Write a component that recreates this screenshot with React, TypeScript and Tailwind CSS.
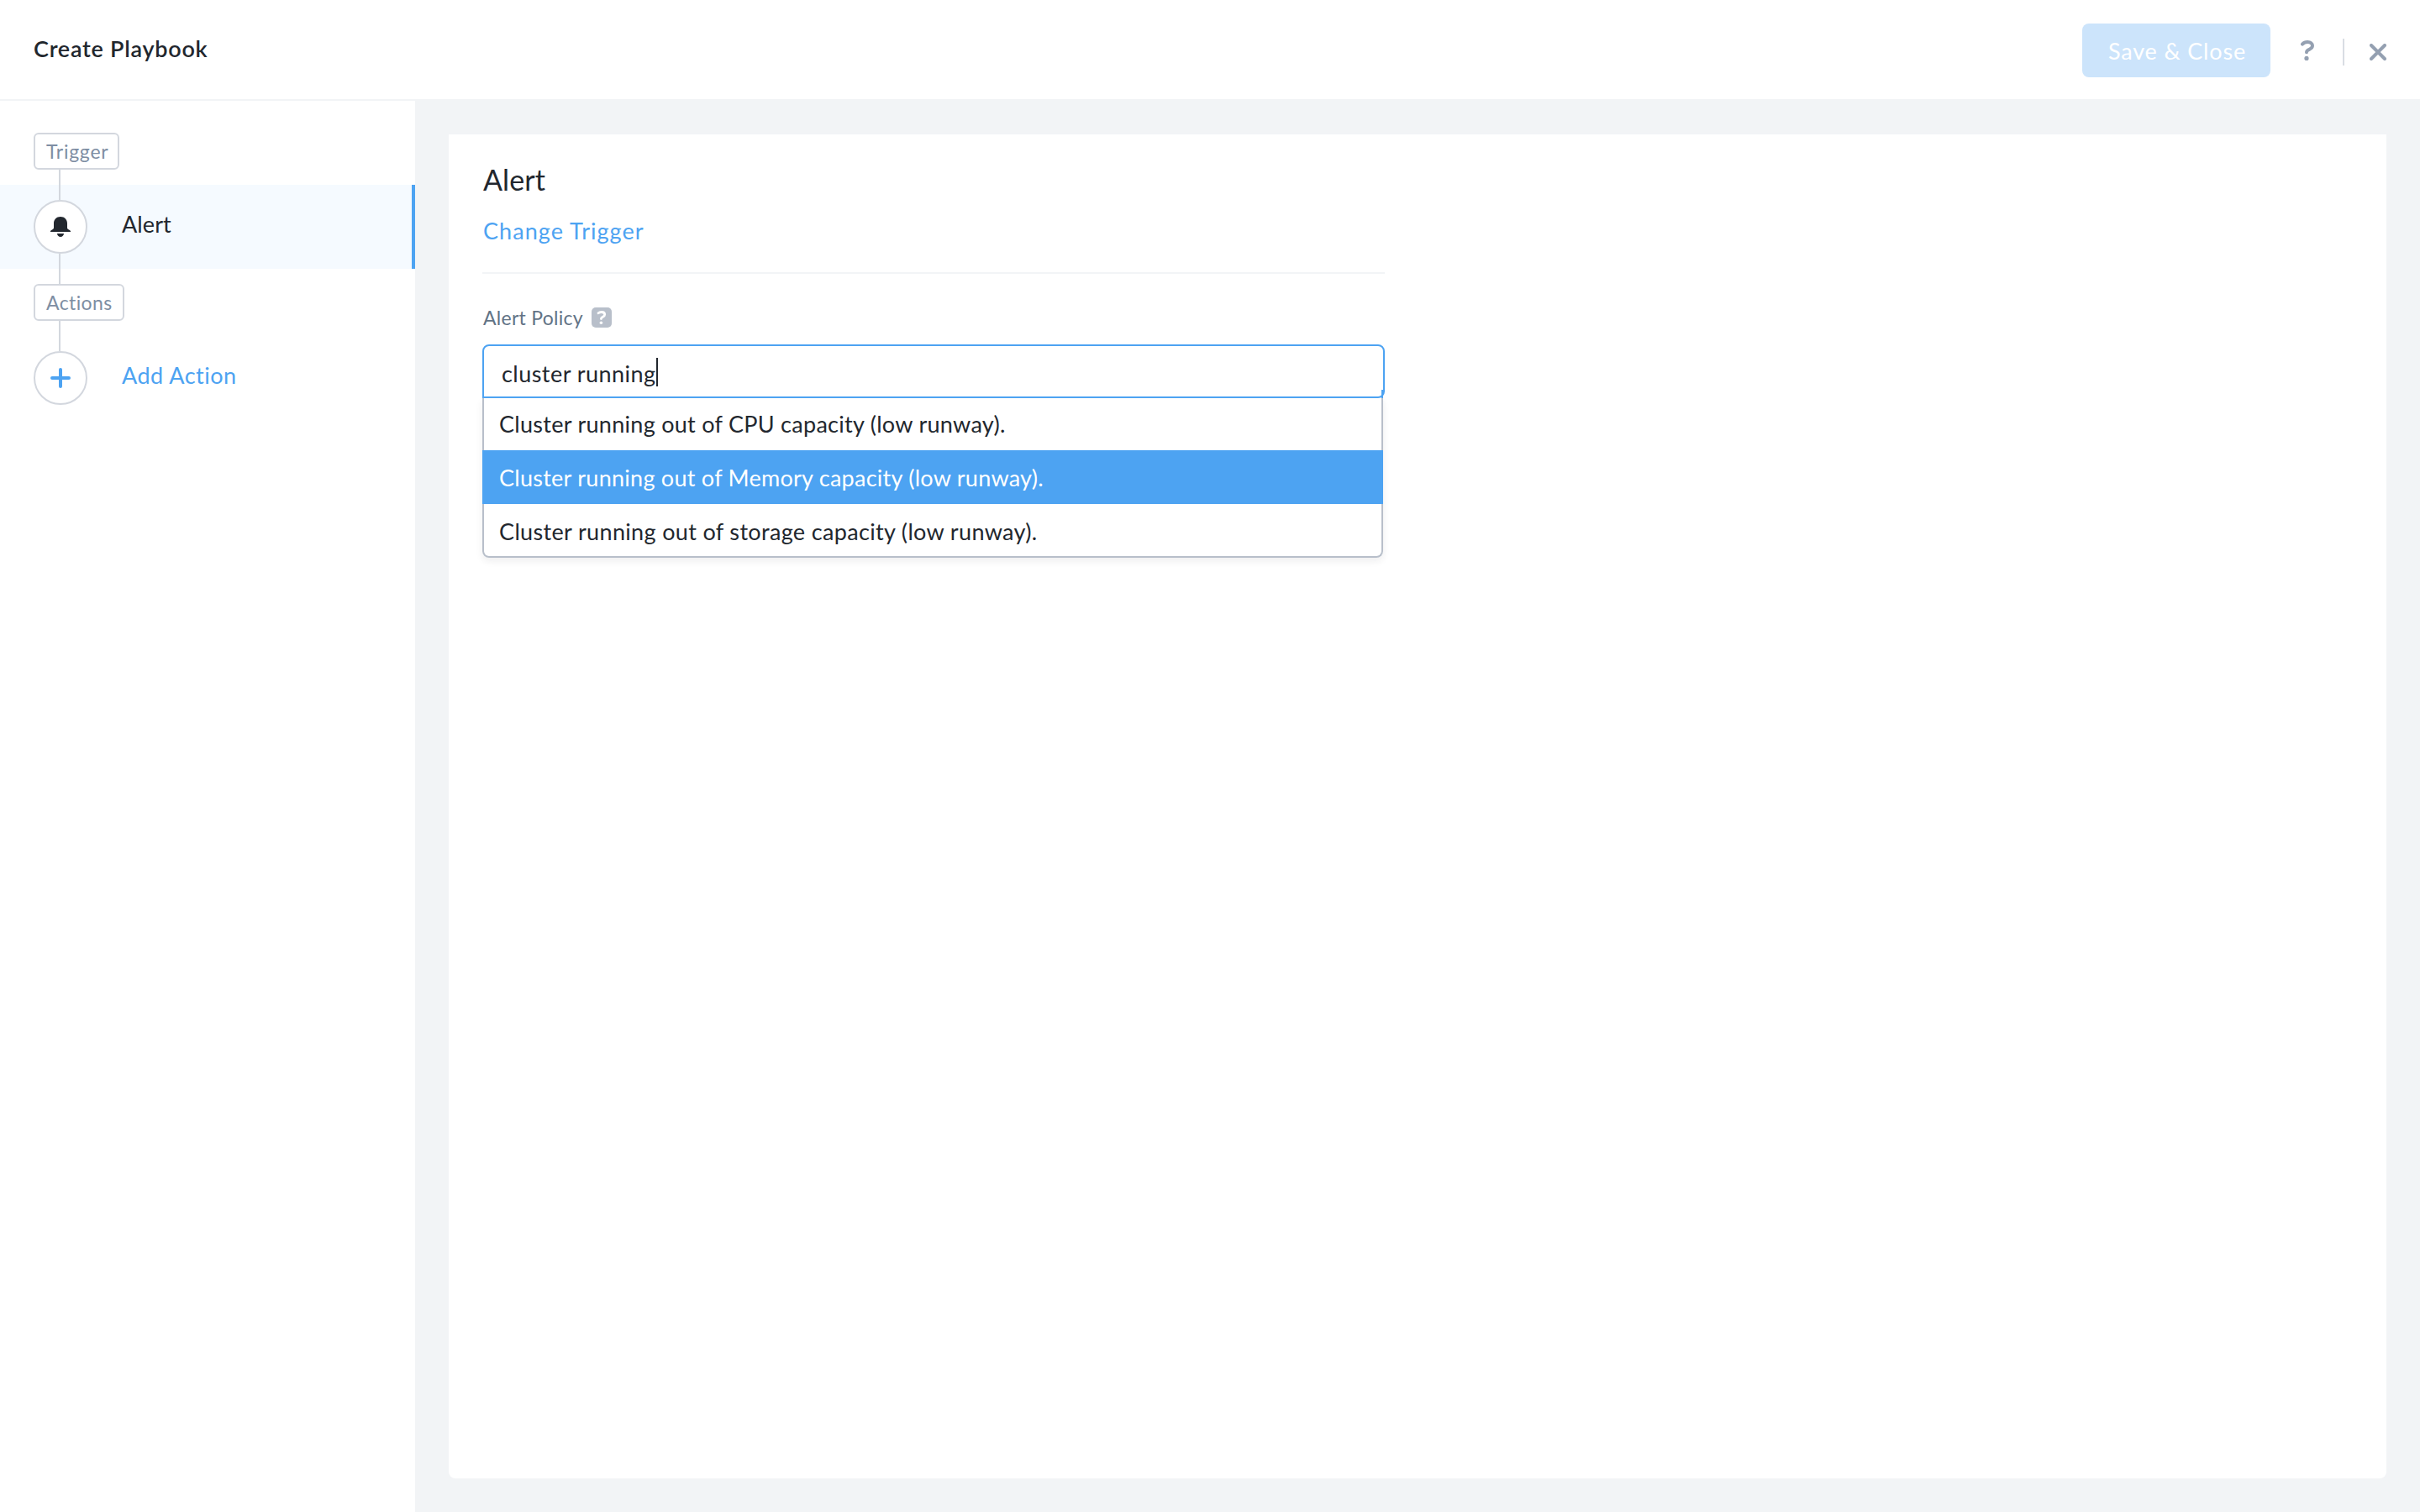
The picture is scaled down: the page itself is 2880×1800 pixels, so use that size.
import { useState } from 'react';

interface Policy {
  id: string;
  label: string;
  spacing: string;
}

const policies: Policy[] = [
  { id: 'cpu', label: 'Cluster running out of CPU capacity (low runway).', spacing: 'tracking-[0.28px]' },
  { id: 'memory', label: 'Cluster running out of Memory capacity (low runway).', spacing: 'tracking-[0.26px]' },
  { id: 'storage', label: 'Cluster running out of storage capacity (low runway).', spacing: 'tracking-[0.34px]' },
];

const BellIcon = () => (
  <svg width="24" height="24" viewBox="0 0 24 24" fill="#22272e">
    <path d="M12 0C7.2 0 4 3.4 4 8v5c0 1.2-.7 2-2 2.6C.7 16.2 0 16.8 0 17.6V18h24v-.4c0-.8-.7-1.4-2-2-1.3-.6-2-1.4-2-2.6V8c0-4.6-3.2-8-8-8z" />
    <path d="M8 20h8c0 2.2-1.8 4-4 4s-4-1.800-4-4z" />
  </svg>
);

const PlusIcon = () => (
  <svg width="24" height="24" viewBox="0 0 24 24" fill="none" stroke="#4da3f2" strokeWidth="4" strokeLinecap="round">
    <path d="M12 2v20M2 12h20" />
  </svg>
);

const QuestionIcon = () => (
  <svg width="16" height="24" viewBox="0 0 16 24" fill="none">
    <path
      d="M2 4.6C3.6 2.8 5.6 2 8.2 2c3.6 0 5.8 1.8 5.8 4.6 0 4.8-7 3.6-7 7.6"
      stroke="#94a0b1"
      strokeWidth="4"
      strokeLinecap="round"
      strokeLinejoin="round"
    />
    <circle cx="7" cy="21.4" r="2.6" fill="#94a0b1" />
  </svg>
);

const CloseIcon = () => (
  <svg width="20" height="20" viewBox="0 0 20 20" fill="none" stroke="#94a0b1" strokeWidth="4" strokeLinecap="round">
    <path d="M2 2l16 16M18 2L2 18" />
  </svg>
);

const HelpBadge = () => (
  <svg width="24" height="24" viewBox="0 0 24 24" fill="none">
    <rect width="24" height="24" rx="5" fill="#b8bfca" />
    <path
      d="M8 6.8C9 5.9 10.2 5.5 11.800 5.5c2.3 0 3.9 1.1 3.9 3 0 3-4.3 2.5-4.3 5"
      stroke="#fff"
      strokeWidth="2.8"
      strokeLinecap="round"
      strokeLinejoin="round"
    />
    <circle cx="11.4" cy="18.3" r="1.8" fill="#fff" />
  </svg>
);

const Connector = ({ className }: { className: string }) => (
  <div className={`ml-[70px] w-[2px] bg-[#d3d7de] ${className}`} />
);

const Header = () => (
  <header className="flex h-[120px] shrink-0 items-start justify-between border-b-2 border-[#f2f4f6] bg-white pl-10 pr-10">
    <h1 className="pt-[38px] text-[27px] font-semibold leading-[40px] tracking-[0.74px]">Create Playbook</h1>
    <div className="flex items-start pt-7">
      <button
        disabled
        className="h-16 w-[224px] rounded-lg bg-[#cce4fb] pl-[2px] pt-px text-[27px] leading-[63px] tracking-[0.83px] text-white"
      >
        Save &amp; Close
      </button>
      <button className="ml-9 mt-5">
        <QuestionIcon />
      </button>
      <div className="ml-[34px] mt-[18px] h-8 w-[2px] bg-[#d9dde3]" />
      <button className="ml-[30px] mt-6">
        <CloseIcon />
      </button>
    </div>
  </header>
);

const Sidebar = () => (
  <aside className="w-[494px] shrink-0 bg-white pt-[38px]">
    <div className="ml-10 h-11 w-[102px] rounded-md border-2 border-[#d3d7de] pl-[13px] text-[23px] leading-[40px] tracking-[0.75px] text-[#7e8ea3]">
      Trigger
    </div>
    <Connector className="h-[18px]" />

    <div className="flex h-[100px] border-r-4 border-[#4da3f2] bg-[#f5faff]">
      <div className="flex flex-col">
        <Connector className="h-[18px]" />
        <div className="ml-10 flex h-16 w-16 items-center justify-center rounded-full border-2 border-[#d3d7de] bg-white">
          <BellIcon />
        </div>
        <Connector className="h-[18px]" />
      </div>
      <span className="ml-[41px] pt-[27px] text-[27px] leading-[40px] tracking-[0.1px]">Alert</span>
    </div>

    <Connector className="h-[18px]" />
    <div className="ml-10 h-11 w-[108px] rounded-md border-2 border-[#d3d7de] pl-[13px] text-[23px] leading-[40px] tracking-[0.4px] text-[#7e8ea3]">
      Actions
    </div>
    <Connector className="h-9" />

    <div className="flex pl-10">
      <button className="flex h-16 w-16 items-center justify-center rounded-full border-2 border-[#d3d7de] bg-white">
        <PlusIcon />
      </button>
      <span className="ml-[41px] pt-[9px] text-[27px] leading-[40px] tracking-[0.5px] text-[#4da3f2]">Add Action</span>
    </div>
  </aside>
);

const PolicySelect = () => {
  const [query] = useState('cluster running');
  const [highlighted, setHighlighted] = useState('memory');

  return (
    <div className="w-[1074px]">
      <div className="relative flex h-16 items-start rounded-lg rounded-bl-none border-2 border-[#4da3f2] pl-[21px] pt-[14px]">
        <span className="whitespace-pre pt-px text-[27px] leading-[36px] tracking-[0.46px]">{query}</span>
        <span className="h-[34px] w-[2px] bg-[#22272e]" />
        {/* edge where the menu tucks under the field */}
        <span className="absolute -bottom-[2px] right-0 h-[10px] w-[2px] bg-[#4da3f2]" />
      </div>
      <ul className="h-[190px] w-[1072px] rounded-b-lg shadow-[0_4px_8px_rgba(34,39,46,0.08)]">
        {policies.map(({ id, label, spacing }) => {
          const isActive = id === highlighted;
          return (
            <li
              key={id}
              onMouseEnter={() => setHighlighted(id)}
              className={`whitespace-nowrap border-x-2 pl-[18px] text-[27px] ${spacing} ${
                isActive ? 'border-[#4da3f2] bg-[#4da3f2] text-white' : 'border-[#b8bfca] bg-white'
              } ${id === 'cpu' ? 'h-[62px] leading-[61px]' : 'h-16 leading-[65px]'} ${
                id === 'storage' ? 'rounded-b-lg border-b-2' : ''
              }`}
            >
              {label}
            </li>
          );
        })}
      </ul>
    </div>
  );
};

const App = () => {
  return (
    <div className="flex h-[1800px] w-[2880px] flex-col overflow-hidden bg-[#f2f4f6] font-['Lato','Open_Sans',sans-serif] text-[#22272e]">
      <Header />
      <div className="flex flex-1">
        <Sidebar />
        <main className="flex-1 p-10">
          <section className="h-full rounded-b-lg bg-white px-10 pt-[33px]">
            <h2 className="pl-px text-[34px] leading-[42px] tracking-[0.1px]">Alert</h2>
            <a href="#" className="mt-[20px] block pl-px text-[27px] leading-[40px] tracking-[1.05px] text-[#4da3f2]">
              Change Trigger
            </a>
            <div className="mt-[29px] h-[2px] w-[1074px] bg-[#f2f4f6]" />
            <div className="flex items-center pb-5 pt-10">
              <label className="pl-px text-[23px] leading-[24px] tracking-[0.27px] text-[#627386]">Alert Policy</label>
              <span className="ml-[10px]">
                <HelpBadge />
              </span>
            </div>
            <PolicySelect />
          </section>
        </main>
      </div>
    </div>
  );
};

export default App;
